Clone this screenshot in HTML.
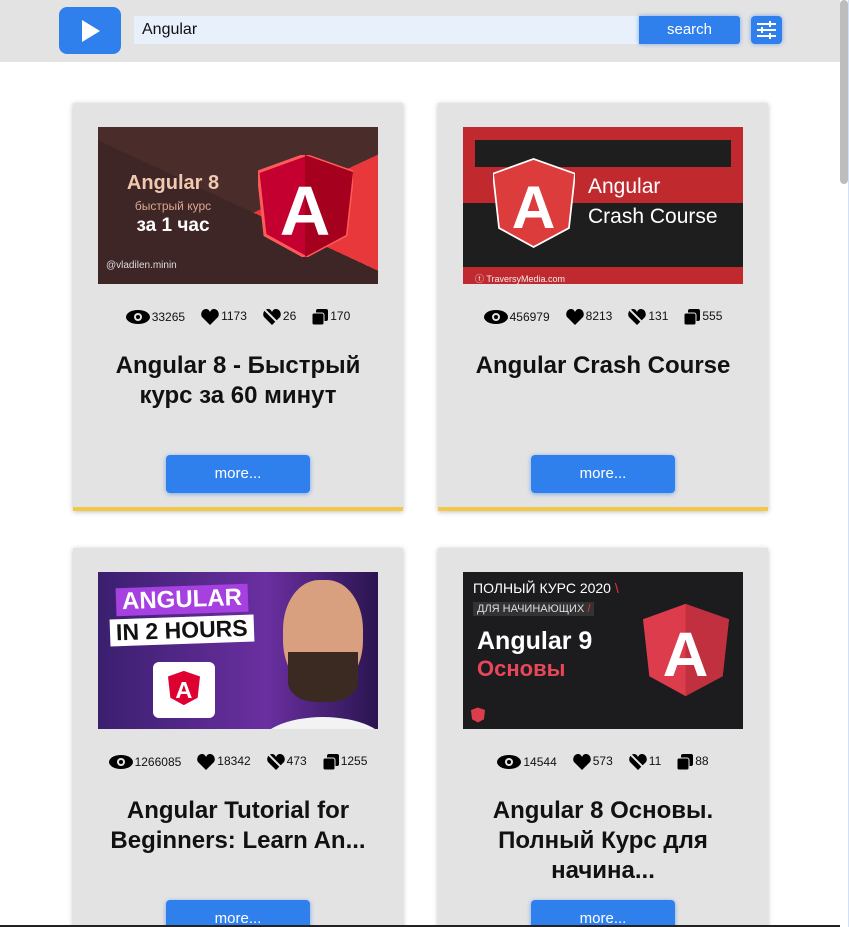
<!DOCTYPE html>
<html style="width:849px;height:927px;overflow:hidden"><head><meta charset="utf-8"><style>
*{box-sizing:border-box;margin:0;padding:0}
body{width:849px;height:927px;overflow:hidden;background:#fff;font-family:"Liberation Sans","Noto Sans CJK SC",sans-serif;position:relative}
.hdr{position:absolute;left:0;top:0;width:840px;height:62px;background:#e3e3e3}
.logo{position:absolute;left:59px;top:7px;width:62px;height:47px;background:#2f80ed;border-radius:8px}
.logo:after{content:"";position:absolute;left:23px;top:13px;border-left:18px solid #fff;border-top:11px solid transparent;border-bottom:11px solid transparent}
.inp{position:absolute;left:134px;top:16px;width:505px;height:28px;background:#e8f0fc;font-size:16px;line-height:28px;padding-left:8px;color:#111}
.sbtn{position:absolute;left:639px;top:16px;width:101px;height:28px;background:#2f80ed;color:#fff;font-size:15px;text-align:center;line-height:28px;border-radius:0 3px 3px 0;box-shadow:0 0 5px rgba(47,128,237,.6)}
.fbtn{position:absolute;left:751px;top:16px;width:31px;height:28px;background:#2f80ed;border-radius:4px;box-shadow:0 0 5px rgba(47,128,237,.6)}
.sb{position:absolute;left:840px;top:0;width:8px;height:184px;background:#bdbdbd;border-radius:4px}
.sbl{position:absolute;left:848px;top:0;width:1px;height:927px;background:#cfe0f8}
.card{position:absolute;width:330px;height:408px;background:#e3e3e3;box-shadow:0 1px 5px rgba(0,0,0,.25);border-bottom:4px solid #f2c84b}
.th{position:absolute;left:25px;top:24px;width:280px;height:157px;overflow:hidden}
.st{position:absolute;left:0;width:330px;top:206px;text-align:center;font-size:12px;color:#111;white-space:nowrap}
.st span{display:inline-block;margin:0 8px;vertical-align:middle}
.st svg{vertical-align:middle;margin-right:2px}
.tt{position:absolute;left:20px;width:290px;top:248px;text-align:center;font-size:24px;font-weight:bold;line-height:30px;color:#111}
.mb{position:absolute;left:93px;top:352px;width:144px;height:38px;background:#2f80ed;color:#fff;border-radius:4px;text-align:center;line-height:38px;font-size:15px;box-shadow:0 1px 5px rgba(47,128,237,.6)}
.shield{position:absolute}
</style></head><body>
<div class="hdr">
<div class="logo"></div>
<div class="inp">Angular</div>
<div class="sbtn">search</div>
<div class="fbtn"><svg width="31" height="28" viewBox="0 0 31 28"><g stroke="#fff" stroke-width="2"><line x1="6" y1="8" x2="25" y2="8"/><line x1="6" y1="14" x2="25" y2="14"/><line x1="6" y1="20" x2="25" y2="20"/><line x1="19" y1="5" x2="19" y2="11"/><line x1="11" y1="11" x2="11" y2="17"/><line x1="19" y1="17" x2="19" y2="23"/></g></svg></div>
</div>
<div class="sb"></div><div class="sbl"></div>

<div class="card" style="left:73px;top:103px">
<div class="th" style="background:linear-gradient(155deg,#4a2c2a 0 55%,#e8383c 55%)">
<div style="position:absolute;left:0;top:0;width:280px;height:157px;background:linear-gradient(25deg,#3f2626 0 50%,transparent 50%)"></div>
<div style="position:absolute;left:20px;top:45px;width:110px;text-align:center;color:#f1c9b0;font-weight:bold;font-size:20px">Angular 8</div>
<div style="position:absolute;left:20px;top:72px;width:110px;text-align:center;color:#d9a890;font-size:12px">быстрый курс</div>
<div style="position:absolute;left:20px;top:88px;width:110px;text-align:center;color:#fff;font-weight:bold;font-size:19px">за 1 час</div>
<div style="position:absolute;left:8px;top:133px;color:#ddd;font-size:10px">@vladilen.minin</div>
<svg class="shield" style="left:160px;top:28px" width="95" height="102" viewBox="0 0 95 102"><path d="M47 0 95 17 88 80 47 102 7 80 0 17Z" fill="#c3002f" stroke="#ff5a5a" stroke-width="3"/><path d="M47 0 95 17 88 80 47 102Z" fill="#a6001f"/><text x="47" y="80" text-anchor="middle" fill="#fff" font-size="70" font-family="Liberation Sans" font-weight="bold">A</text></svg>
</div>
<div class="st">
<span><svg width="24" height="14" viewBox="0 0 24 14"><ellipse cx="12" cy="7" rx="12" ry="7"/><circle cx="12" cy="7" r="4" fill="#e3e3e3"/><circle cx="12" cy="7" r="2"/></svg>33265</span><span><svg width="18" height="16" viewBox="0 0 18 16"><path d="M9 16 1 8C-1 5 1 0 5 0 7 0 8 1 9 3 10 1 11 0 13 0 17 0 19 5 17 8Z"/></svg>1173</span><span><svg width="18" height="16" viewBox="0 0 18 16"><path d="M9 16 1 8C-1 5 1 0 5 0 7 0 8 1 9 3 10 1 11 0 13 0 17 0 19 5 17 8Z"/><line x1="2" y1="1" x2="17" y2="16" stroke="#e3e3e3" stroke-width="2"/></svg>26</span><span><svg width="16" height="16" viewBox="0 0 16 16"><rect x="4" y="0" width="12" height="12" rx="2"/><rect x="0" y="4" width="12" height="12" rx="2" stroke="#e3e3e3" stroke-width="1"/></svg>170</span>
</div>
<div class="tt">Angular 8 - Быстрый курс за 60 минут</div>
<div class="mb">more...</div>
</div>

<div class="card" style="left:438px;top:103px">
<div class="th" style="background:#c02a2f">
<div style="position:absolute;left:12px;top:13px;width:256px;height:27px;background:#1e1e1e"></div>
<div style="position:absolute;left:0;top:76px;width:280px;height:64px;background:#1e1e1e"></div>
<div style="position:absolute;left:0;top:50px;width:280px;height:26px;background:#c02a2f"></div>
<svg class="shield" style="left:30px;top:30px" width="82" height="92" viewBox="0 0 95 102"><path d="M47 0 95 17 88 80 47 102 7 80 0 17Z" fill="#dd3c3c" stroke="#fff" stroke-width="2"/><text x="47" y="80" text-anchor="middle" fill="#fff" font-size="70" font-family="Liberation Sans" font-weight="bold">A</text></svg>
<div style="position:absolute;left:125px;top:48px;color:#fff;font-size:21px">Angular</div>
<div style="position:absolute;left:125px;top:78px;color:#fff;font-size:21px">Crash Course</div>
<div style="position:absolute;left:12px;top:145px;color:#eee;font-size:9px">ⓣ TraversyMedia.com</div>
</div>
<div class="st">
<span><svg width="24" height="14" viewBox="0 0 24 14"><ellipse cx="12" cy="7" rx="12" ry="7"/><circle cx="12" cy="7" r="4" fill="#e3e3e3"/><circle cx="12" cy="7" r="2"/></svg>456979</span><span><svg width="18" height="16" viewBox="0 0 18 16"><path d="M9 16 1 8C-1 5 1 0 5 0 7 0 8 1 9 3 10 1 11 0 13 0 17 0 19 5 17 8Z"/></svg>8213</span><span><svg width="18" height="16" viewBox="0 0 18 16"><path d="M9 16 1 8C-1 5 1 0 5 0 7 0 8 1 9 3 10 1 11 0 13 0 17 0 19 5 17 8Z"/><line x1="2" y1="1" x2="17" y2="16" stroke="#e3e3e3" stroke-width="2"/></svg>131</span><span><svg width="16" height="16" viewBox="0 0 16 16"><rect x="4" y="0" width="12" height="12" rx="2"/><rect x="0" y="4" width="12" height="12" rx="2" stroke="#e3e3e3" stroke-width="1"/></svg>555</span>
</div>
<div class="tt">Angular Crash Course</div>
<div class="mb">more...</div>
</div>

<div class="card" style="left:73px;top:548px">
<div class="th" style="background:linear-gradient(90deg,#3a1f6e,#6a2fa0 60%,#2a1550)">
<div style="position:absolute;left:18px;top:14px;background:#a640e0;color:#fff;font-weight:bold;font-size:24px;padding:0 6px;transform:rotate(-2deg)">ANGULAR</div>
<div style="position:absolute;left:12px;top:45px;background:#fff;color:#111;font-weight:bold;font-size:23px;padding:0 6px;transform:rotate(-2deg)">IN 2 HOURS</div>
<div style="position:absolute;left:55px;top:90px;width:62px;height:56px;background:#fff;border-radius:6px"></div>
<svg class="shield" style="left:70px;top:96px" width="32" height="40" viewBox="0 0 95 102"><path d="M47 0 95 17 88 80 47 102 7 80 0 17Z" fill="#dd0031"/><text x="47" y="80" text-anchor="middle" fill="#fff" font-size="70" font-family="Liberation Sans" font-weight="bold">A</text></svg>
<div style="position:absolute;left:160px;top:145px;width:130px;height:60px;background:#f3f3f3;border-radius:50% 50% 0 0"></div>
<div style="position:absolute;left:185px;top:8px;width:80px;height:110px;background:#d8a07e;border-radius:45%"></div>
<div style="position:absolute;left:190px;top:80px;width:70px;height:50px;background:#3a2a22;border-radius:0 0 40% 40%"></div>
</div>
<div class="st">
<span><svg width="24" height="14" viewBox="0 0 24 14"><ellipse cx="12" cy="7" rx="12" ry="7"/><circle cx="12" cy="7" r="4" fill="#e3e3e3"/><circle cx="12" cy="7" r="2"/></svg>1266085</span><span><svg width="18" height="16" viewBox="0 0 18 16"><path d="M9 16 1 8C-1 5 1 0 5 0 7 0 8 1 9 3 10 1 11 0 13 0 17 0 19 5 17 8Z"/></svg>18342</span><span><svg width="18" height="16" viewBox="0 0 18 16"><path d="M9 16 1 8C-1 5 1 0 5 0 7 0 8 1 9 3 10 1 11 0 13 0 17 0 19 5 17 8Z"/><line x1="2" y1="1" x2="17" y2="16" stroke="#e3e3e3" stroke-width="2"/></svg>473</span><span><svg width="16" height="16" viewBox="0 0 16 16"><rect x="4" y="0" width="12" height="12" rx="2"/><rect x="0" y="4" width="12" height="12" rx="2" stroke="#e3e3e3" stroke-width="1"/></svg>1255</span>
</div>
<div class="tt">Angular Tutorial for Beginners: Learn An...</div>
<div class="mb">more...</div>
</div>

<div class="card" style="left:438px;top:548px">
<div class="th" style="background:#1c1c1e">
<div style="position:absolute;left:10px;top:8px;color:#fff;font-size:14px">ПОЛНЫЙ КУРС 2020 <span style="color:#e33">\</span></div>
<div style="position:absolute;left:10px;top:30px;color:#ddd;font-size:11px;background:#333;padding:1px 4px">ДЛЯ НАЧИНАЮЩИХ <span style="color:#e33">/</span></div>
<div style="position:absolute;left:14px;top:55px;color:#fff;font-weight:bold;font-size:25px">Angular 9</div>
<div style="position:absolute;left:14px;top:84px;color:#e8465a;font-weight:bold;font-size:22px">Основы</div>
<svg class="shield" style="left:180px;top:28px" width="86" height="100" viewBox="0 0 95 102"><path d="M47 0 95 17 88 80 47 102 7 80 0 17Z" fill="#dd3c4c"/><path d="M47 0 95 17 88 80 47 102Z" fill="#c0303e"/><text x="47" y="80" text-anchor="middle" fill="#fff" font-size="70" font-family="Liberation Sans" font-weight="bold">A</text></svg>
<svg class="shield" style="left:8px;top:135px" width="14" height="16" viewBox="0 0 95 102"><path d="M47 0 95 17 88 80 47 102 7 80 0 17Z" fill="#dd3c4c"/></svg>
</div>
<div class="st">
<span><svg width="24" height="14" viewBox="0 0 24 14"><ellipse cx="12" cy="7" rx="12" ry="7"/><circle cx="12" cy="7" r="4" fill="#e3e3e3"/><circle cx="12" cy="7" r="2"/></svg>14544</span><span><svg width="18" height="16" viewBox="0 0 18 16"><path d="M9 16 1 8C-1 5 1 0 5 0 7 0 8 1 9 3 10 1 11 0 13 0 17 0 19 5 17 8Z"/></svg>573</span><span><svg width="18" height="16" viewBox="0 0 18 16"><path d="M9 16 1 8C-1 5 1 0 5 0 7 0 8 1 9 3 10 1 11 0 13 0 17 0 19 5 17 8Z"/><line x1="2" y1="1" x2="17" y2="16" stroke="#e3e3e3" stroke-width="2"/></svg>11</span><span><svg width="16" height="16" viewBox="0 0 16 16"><rect x="4" y="0" width="12" height="12" rx="2"/><rect x="0" y="4" width="12" height="12" rx="2" stroke="#e3e3e3" stroke-width="1"/></svg>88</span>
</div>
<div class="tt">Angular 8 Основы. Полный Курс для начина...</div>
<div class="mb">more...</div>
</div>
<div style="position:absolute;left:0;top:925px;width:840px;height:2px;background:#222"></div>
</body></html>
